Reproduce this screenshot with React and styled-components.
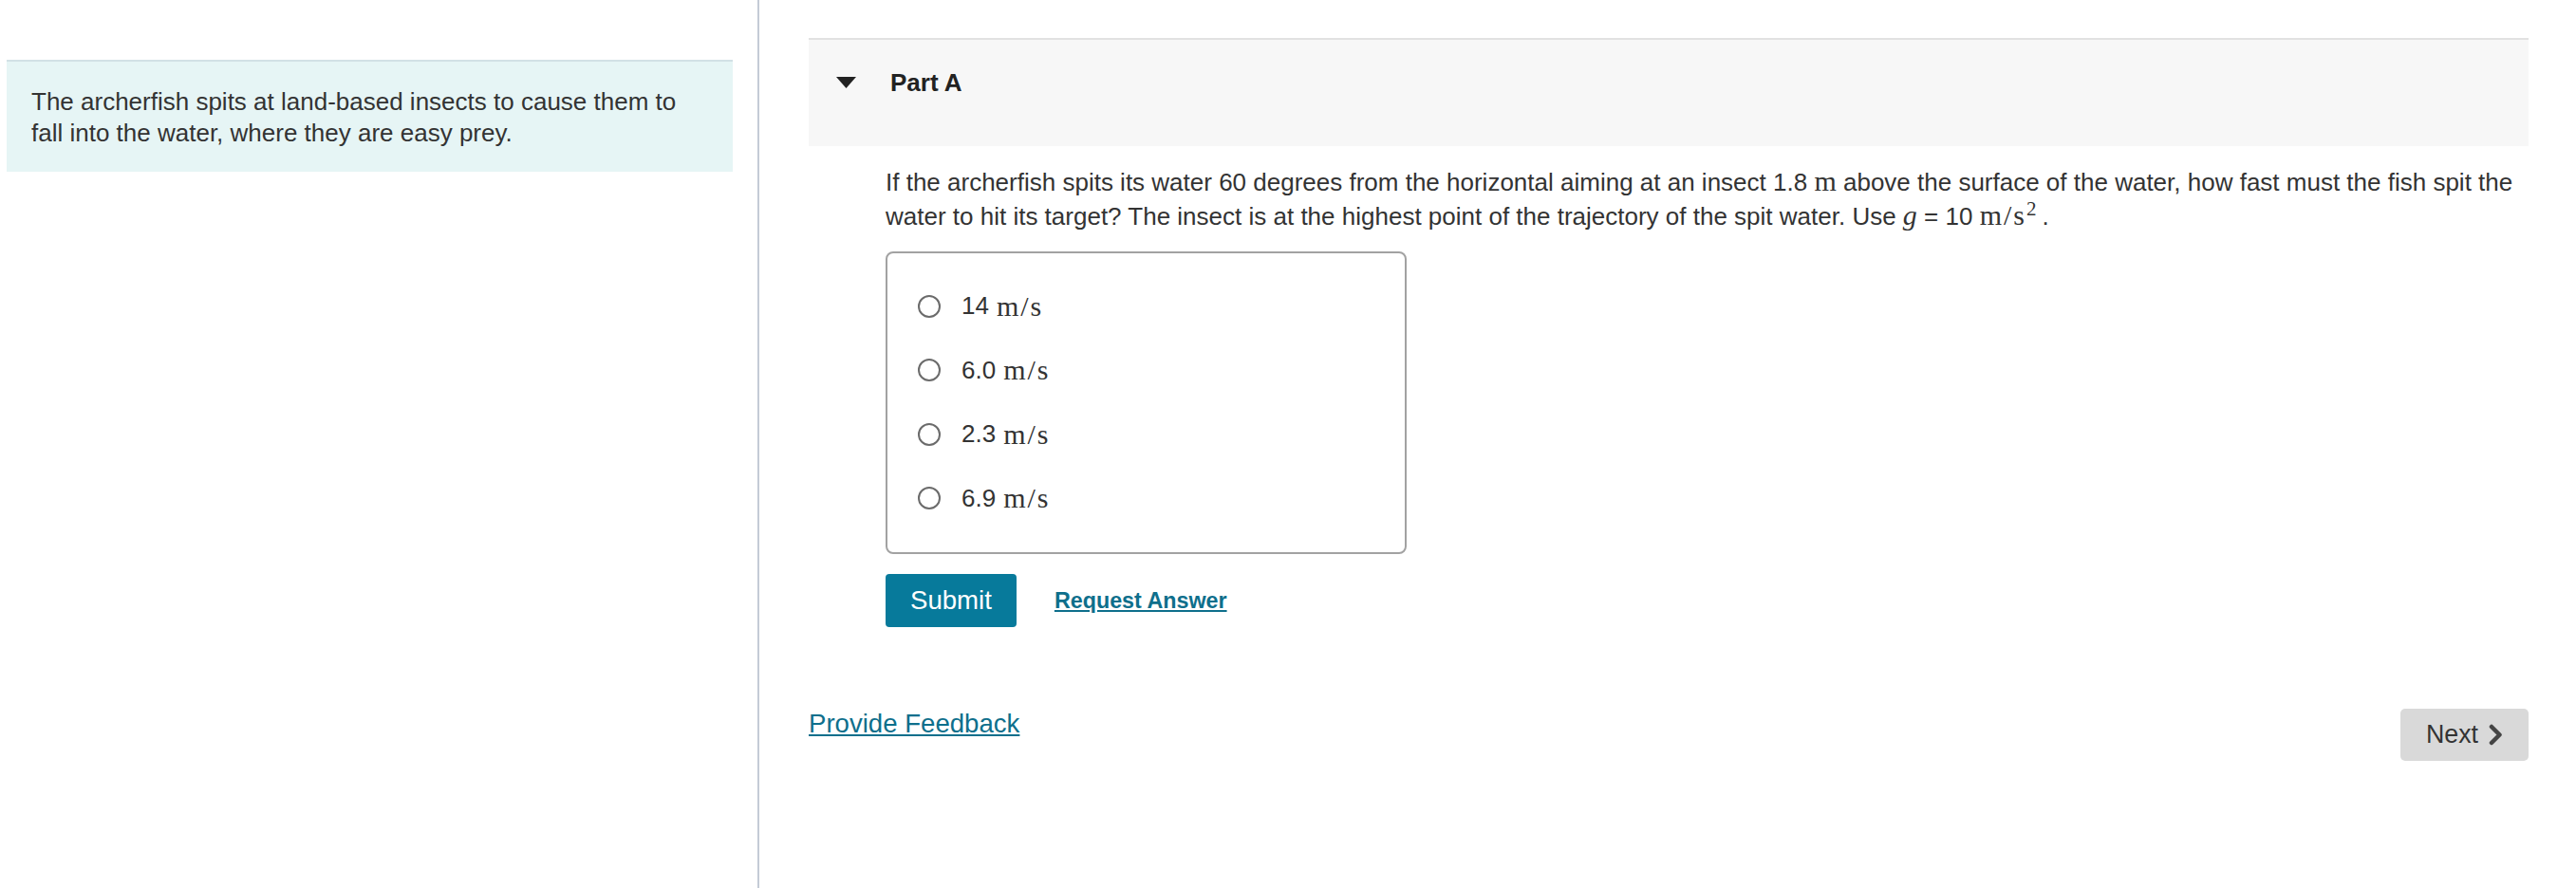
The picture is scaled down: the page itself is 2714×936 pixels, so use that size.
import React from 'react';
import styled, { createGlobalStyle } from 'styled-components';

const GlobalStyle = createGlobalStyle`
  html, body {
    margin: 0;
    padding: 0;
    background: #fff;
  }
  body {
    font-family: "Liberation Sans", Arial, sans-serif;
    color: #333;
  }
`;

const Page = styled.div`
  display: flex;
  min-height: 936px;
`;

const LeftColumn = styled.aside`
  width: 800px;
  flex-shrink: 0;
  box-sizing: border-box;
  padding: 63px 26px 0 7px;
  border-right: 2px solid #c4cbd6;
`;

const IntroBox = styled.div`
  background: #e6f5f5;
  border-top: 2px solid #d2e1e5;
  padding: 26px 26px 24px;
  font-size: 26px;
  line-height: 33px;
  color: #333;
`;

const RightColumn = styled.main`
  flex: 1;
  padding: 40px 50px 0 52px;
`;

const PartHeader = styled.div`
  display: flex;
  align-items: center;
  height: 82px;
  background: #f7f7f7;
  border-top: 2px solid #e2e2e2;
  padding: 30px 0 0 29px;
  align-items: flex-start;
`;

const Caret = styled.svg`
  width: 21px;
  height: 12px;
  margin: 9px 36px 0 0;
`;

const PartTitle = styled.h2`
  margin: 0;
  font-size: 26px;
  line-height: 30px;
  font-weight: bold;
  color: #222;
`;

const PartBody = styled.div`
  padding-left: 81px;
`;

const Question = styled.p`
  margin: 20px 0 19px;
  font-size: 26px;
  line-height: 36px;
  color: #333;
`;

const MathText = styled.span`
  font-family: "Liberation Serif", "Times New Roman", serif;
  font-size: 30px;
  line-height: 0;
  font-style: ${p => (p.$italic ? 'italic' : 'normal')};
  letter-spacing: ${p => (p.$spread ? '2px' : '0')};
`;

const Sup = styled.sup`
  font-family: "Liberation Serif", "Times New Roman", serif;
  font-size: 21px;
  line-height: 0;
  margin-right: 6px;
`;

const OptionsBox = styled.div`
  width: 549px;
  box-sizing: border-box;
  border: 2px solid #a2a2a2;
  border-radius: 8px;
  padding: 22px 0 23px 32px;
`;

const OptionRow = styled.label`
  display: flex;
  align-items: center;
  height: 67.5px;
  font-size: 26px;
  color: #333;
  cursor: pointer;
`;

const Radio = styled.input.attrs({ type: 'radio' })`
  appearance: none;
  width: 24px;
  height: 24px;
  margin: 0 22px 0 0;
  border: 2px solid #6b6b6b;
  border-radius: 50%;
  background: #fff;
  box-sizing: border-box;
`;

const Unit = styled.span`
  font-family: "Liberation Serif", "Times New Roman", serif;
  font-size: 30px;
  letter-spacing: 2px;
  margin-left: 8px;
`;

const Actions = styled.div`
  display: flex;
  align-items: center;
  gap: 40px;
  margin-top: 21px;
`;

const SubmitButton = styled.button`
  height: 56px;
  padding: 0 26px;
  border: none;
  border-radius: 4px;
  background: #077a9b;
  color: #fff;
  font-family: "Liberation Sans", Arial, sans-serif;
  font-size: 27.6px;
`;

const TextLink = styled.a`
  color: #0e6f8c;
  text-decoration: underline;
  font-size: ${p => (p.$small ? '23.3px' : '27.6px')};
  font-weight: ${p => (p.$small ? 'bold' : 'normal')};
  line-height: 32px;
  cursor: pointer;
`;

const Footer = styled.div`
  display: flex;
  justify-content: space-between;
  align-items: flex-start;
  margin-top: 86px;
`;

const NextButton = styled.button`
  display: flex;
  align-items: center;
  gap: 11px;
  height: 55px;
  padding: 0 27px;
  border: none;
  border-radius: 5px;
  background: #d9d9d9;
  color: #333;
  font-family: "Liberation Sans", Arial, sans-serif;
  font-size: 26.8px;
`;

const options = ['14', '6.0', '2.3', '6.9'];

export default function App() {
  return (
    <>
      <GlobalStyle />
      <Page>
        <LeftColumn>
          <IntroBox>
            The archerfish spits at land-based insects to cause them to fall into the water, where they are easy prey.
          </IntroBox>
        </LeftColumn>
        <RightColumn>
          <PartHeader>
            <Caret viewBox="0 0 21 12">
              <polygon points="0,0 21,0 10.5,12" fill="#222" />
            </Caret>
            <PartTitle>Part A</PartTitle>
          </PartHeader>
          <PartBody>
            <Question>
              If the archerfish spits its water 60 degrees from the horizontal aiming at an insect 1.8 <MathText>m</MathText> above
              the surface of the water, how fast must the fish spit the water to hit its target? The insect is at the highest
              point of the trajectory of the spit water. Use <MathText $italic>g</MathText> = 10 <MathText $spread>m/s</MathText>
              <Sup>2</Sup>.
            </Question>
            <OptionsBox>
              {options.map(v => (
                <OptionRow key={v}>
                  <Radio name="answer" value={v} />
                  {v}
                  <Unit>m/s</Unit>
                </OptionRow>
              ))}
            </OptionsBox>
            <Actions>
              <SubmitButton>Submit</SubmitButton>
              <TextLink $small>Request Answer</TextLink>
            </Actions>
          </PartBody>
          <Footer>
            <TextLink>Provide Feedback</TextLink>
            <NextButton>
              Next
              <svg width="15" height="23" viewBox="0 0 15 23">
                <path d="M3 3 L11.5 11.5 L3 20" fill="none" stroke="#444" strokeWidth="4.5" strokeLinecap="round" strokeLinejoin="round" />
              </svg>
            </NextButton>
          </Footer>
        </RightColumn>
      </Page>
    </>
  );
}
